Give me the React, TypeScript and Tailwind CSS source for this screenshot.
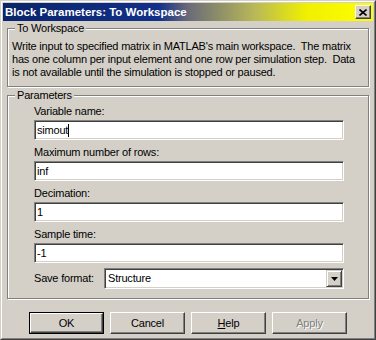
import React from 'react';

// raised / sunken win2000 edges
const raised =
  'bg-[#d4d0c8] border border-t-white border-l-white border-r-[#404040] border-b-[#404040] shadow-[inset_-1px_-1px_0_#808080]';
const sunken =
  'bg-white border border-t-[#808080] border-l-[#808080] border-r-white border-b-white shadow-[inset_1px_1px_0_#404040,inset_-1px_-1px_0_#d4d0c8]';
const group =
  'border border-[#808080] shadow-[inset_1px_1px_0_#fff,1px_1px_0_#fff]';

function Field({ label, value, cursor }: { label: string; value: string; cursor?: boolean }) {
  return (
    <div className="mb-[6px]">
      <div className="h-[13px]">{label}</div>
      <div className={`mt-[2px] h-[20px] flex items-center pl-[2px] ${sunken}`}>
        <span>{value}</span>
        {cursor && <span className="w-px h-[13px] bg-black" />}
      </div>
    </div>
  );
}

function Button({ children, primary, disabled }: { children: React.ReactNode; primary?: boolean; disabled?: boolean }) {
  const face = (
    <div
      className={`h-full w-full flex items-center justify-center ${raised} ${
        disabled ? 'text-[#808080] [text-shadow:1px_1px_0_#fff]' : 'text-black'
      }`}
    >
      {children}
    </div>
  );
  if (primary) {
    return <div className="w-[75px] h-[22px] border border-black">{face}</div>;
  }
  return <div className="w-[75px] h-[22px]">{face}</div>;
}

export default function App() {
  return (
    <div className="w-[376px] h-[340px] bg-[#d4d0c8] border border-t-[#d4d0c8] border-l-[#d4d0c8] border-r-[#404040] border-b-[#404040] text-[11px] leading-[13px] tracking-[-0.2px] text-black font-['Liberation_Sans',Arial,sans-serif]">
      <div className="h-full flex flex-col border border-t-white border-l-white border-r-[#808080] border-b-[#808080] p-px">
        {/* title bar */}
        <div className="h-[18px] flex items-center pl-[2px] pr-[2px] bg-[linear-gradient(90deg,#0a246a_0%,#12308a_42%,#6a6a78_50%,#b8b858_68%,#f0f000_82%,#ffff00_100%)]">
          <span className="text-white font-bold text-[11.5px] tracking-normal">Block Parameters: To Workspace</span>
          <div className={`ml-auto w-[16px] h-[14px] flex items-center justify-center ${raised}`}>
            <svg width="8" height="7" viewBox="0 0 8 7">
              <path d="M0.5 0.5L7.5 6.5M7.5 0.5L0.5 6.5" stroke="#000" strokeWidth="1.6" />
            </svg>
          </div>
        </div>

        <div className="flex flex-col px-[4px]">
          {/* To Workspace */}
          <fieldset className={`mt-px ${group}`}>
            <legend className="ml-[7px] px-[2px] bg-[#d4d0c8]">To Workspace</legend>
            <div className="pt-[5px] pb-[7px] pl-[4px] pr-[4px] whitespace-pre">
              <div>Write input to specified matrix in MATLAB's main workspace.  The matrix</div>
              <div>has one column per input element and one row per simulation step.  Data</div>
              <div>is not available until the simulation is stopped or paused.</div>
            </div>
          </fieldset>

          {/* Parameters */}
          <fieldset className={`mt-[2px] ${group}`}>
            <legend className="ml-[7px] px-[2px] bg-[#d4d0c8]">Parameters</legend>
            <div className="pt-[3px] pb-[9px] pl-[26px] pr-[24px]">
              <Field label="Variable name:" value="simout" cursor />
              <Field label="Maximum number of rows:" value="inf" />
              <Field label="Decimation:" value="1" />
              <Field label="Sample time:" value="-1" />
              <div className="-mt-px flex items-center">
                <div className="w-[70px]">Save format:</div>
                <div className={`flex-1 h-[21px] flex items-center pl-[3px] ${sunken}`}>
                  <span>Structure</span>
                  <div className="ml-auto mr-px h-[17px] w-[16px] flex items-center justify-center bg-[#d4d0c8] border border-t-[#d4d0c8] border-l-[#d4d0c8] border-r-[#404040] border-b-[#404040] shadow-[inset_1px_1px_0_#fff,inset_-1px_-1px_0_#808080]">
                    <svg width="7" height="4" viewBox="0 0 7 4">
                      <path d="M0 0H7L3.5 4Z" fill="#000" />
                    </svg>
                  </div>
                </div>
              </div>
            </div>
          </fieldset>

          {/* buttons */}
          <div className="mt-[13px] pl-[22px] flex gap-[6px]">
            <Button primary>OK</Button>
            <Button>Cancel</Button>
            <Button>
              <span>
                <span className="underline">H</span>elp
              </span>
            </Button>
            <Button disabled>Apply</Button>
          </div>
        </div>
      </div>
    </div>
  );
}
